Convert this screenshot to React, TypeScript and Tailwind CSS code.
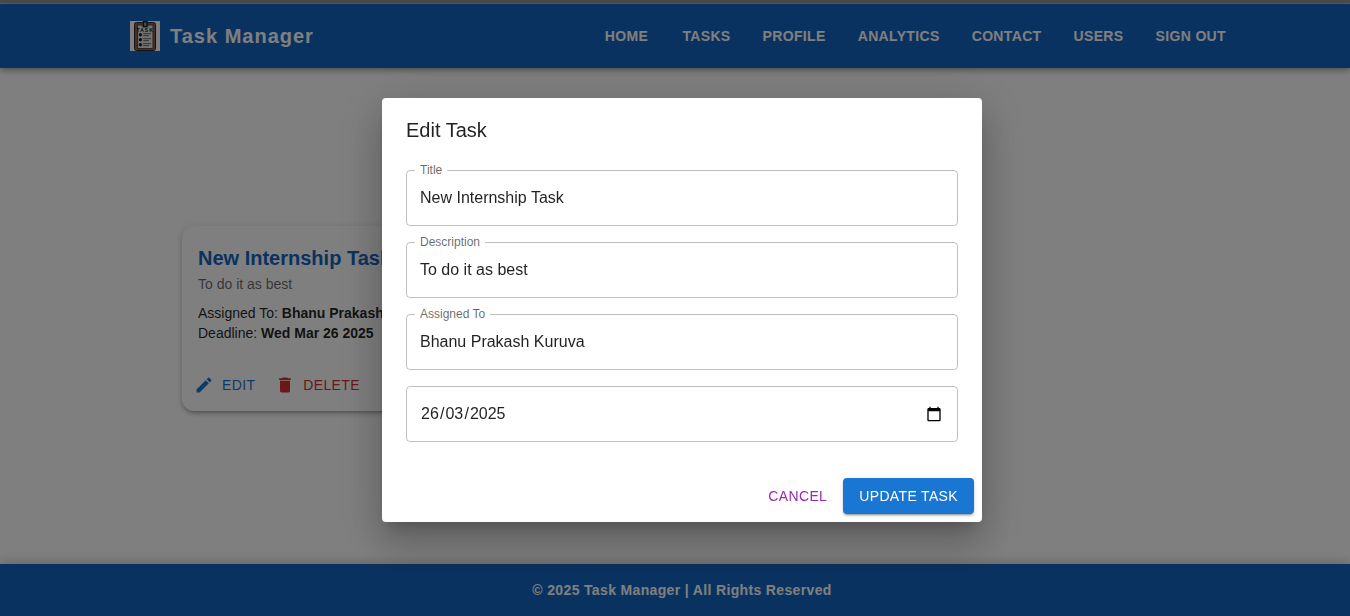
import { useState } from "react";
import { MdDelete, MdEdit } from "react-icons/md";

const links = ["Home", "Tasks", "Profile", "Analytics", "Contact", "Users", "Sign out"];

function Logo() {
  return (
    <svg viewBox="0 0 30 30" className="size-[30px]" role="img" aria-label="Clipboard">
      <rect width="30" height="30" fill="#fff" />
      <rect x="4.500" y="1.500" width="21" height="28" rx="2" fill="#94604a" stroke="#2e2726" />
      <rect x="7.500" y="4" width="15.500" height="23.500" fill="#e4e4e4" stroke="#4c4745" />
      <rect x="11.500" y="3" width="7" height="2.500" fill="#5b6068" />
      <rect x="13.500" y="0.700" width="3.500" height="5" fill="#8c969e" stroke="#15191f" strokeWidth="1.300" />
      <text
        x="15.200"
        y="11"
        textAnchor="middle"
        fontSize="5"
        fontWeight="700"
        fontFamily="Liberation Sans, sans-serif"
        fill="#111"
      >
        TASK
      </text>
      {[13.7, 18.7, 23.7].map((y) => (
        <g key={y}>
          <circle cx="10.400" cy={y} r="1.700" fill="#222" />
          <path d={`M13.200 ${y - 1}h7.800M13.200 ${y + 1}h5.800`} stroke="#666" />
        </g>
      ))}
    </svg>
  );
}

function CalendarIcon() {
  return (
    <svg viewBox="0 0 24 24" className="size-4" aria-hidden="true">
      <path
        d="M20 3h-1V1h-2v2H7V1H5v2H4c-1.1 0-2 .9-2 2v16c0 1.1 .9 2 2 2h16c1.1 0 2-.9 2-2V5c0-1.1-.9-2-2-2zm0 18H4V8h16v13z"
        fill="#000"
      />
    </svg>
  );
}

function Field({ id, label, initial }: { id: string; label: string; initial: string }) {
  const [value, setValue] = useState(initial);
  return (
    <div className="relative">
      <label htmlFor={id} className="absolute -top-2 left-[9px] bg-white px-[5px] text-xs text-black/60">
        {label}
      </label>
      <input
        id={id}
        value={value}
        onChange={(e) => setValue(e.target.value)}
        className="h-14 w-full rounded border border-black/25 px-[13px] text-base text-black/87 outline-none focus:border-[#1976d2]"
      />
    </div>
  );
}

function DateField() {
  return (
    <div
      role="group"
      aria-label="Deadline"
      className="flex h-14 items-center rounded border border-black/25 px-[13px] text-base text-black/87"
    >
      <input aria-label="Day" defaultValue="26" maxLength={2} className="w-5 px-px outline-none" />
      <span>/</span>
      <input aria-label="Month" defaultValue="03" maxLength={2} className="w-5 px-px outline-none" />
      <span>/</span>
      <input aria-label="Year" defaultValue="2025" maxLength={4} className="w-10 px-px outline-none" />
      <button type="button" aria-label="Open calendar" className="ml-auto px-0.5">
        <CalendarIcon />
      </button>
    </div>
  );
}

function TaskCard() {
  return (
    <article className="w-[300px] rounded-xl bg-white shadow-[0_3px_3px_-2px_rgba(0,0,0,0.2),0_3px_4px_0_rgba(0,0,0,0.14),0_1px_8px_0_rgba(0,0,0,0.12)]">
      <div className="p-4 text-sm leading-5">
        <h2 className="text-xl leading-8 font-bold text-[#1565c0]">New Internship Task</h2>
        <p className="text-black/60">To do it as best</p>
        <p className="mt-[9px]">
          Assigned To: <strong>Bhanu Prakash Kuruva</strong>
        </p>
        <p>
          Deadline: <strong>Wed Mar 26 2025</strong>
        </p>
      </div>
      <div className="flex gap-2 p-2 text-sm leading-6 tracking-wide">
        <button type="button" className="flex items-center gap-2 py-1.5 pr-2 pl-1 text-[#1976d2] uppercase">
          <MdEdit className="size-5" />
          Edit
        </button>
        <button type="button" className="flex items-center gap-2 py-1.5 pr-2 pl-1 text-[#d32f2f] uppercase">
          <MdDelete className="size-5" />
          Delete
        </button>
      </div>
    </article>
  );
}

function EditDialog() {
  return (
    <div className="fixed inset-0 flex items-center justify-center bg-black/50 pt-1 pl-3.5">
      <form
        role="dialog"
        aria-modal="true"
        aria-labelledby="dialog-title"
        onSubmit={(e) => e.preventDefault()}
        className="w-full max-w-[600px] rounded bg-white shadow-[0_11px_15px_-7px_rgba(0,0,0,0.2),0_24px_38px_3px_rgba(0,0,0,0.14),0_9px_46px_8px_rgba(0,0,0,0.12)]"
      >
        <h2 id="dialog-title" className="px-6 py-4 text-xl leading-8 text-black/87">
          Edit Task
        </h2>
        <div className="flex flex-col gap-4 px-6 pt-2 pb-7">
          <Field id="title" label="Title" initial="New Internship Task" />
          <Field id="description" label="Description" initial="To do it as best" />
          <Field id="assigned" label="Assigned To" initial="Bhanu Prakash Kuruva" />
          <DateField />
        </div>
        <div className="flex justify-end gap-2 p-2 text-sm leading-6 tracking-wide">
          <button type="button" className="rounded px-2 py-1.5 text-[#9c27b0] uppercase">
            Cancel
          </button>
          <button
            type="submit"
            className="rounded bg-[#1976d2] px-4 py-1.5 text-white uppercase shadow-[0_3px_1px_-2px_rgba(0,0,0,0.2),0_2px_2px_0_rgba(0,0,0,0.14),0_1px_5px_0_rgba(0,0,0,0.12)]"
          >
            Update Task
          </button>
        </div>
      </form>
    </div>
  );
}

export default function App() {
  return (
    <div className="flex min-h-screen flex-col bg-white font-['Liberation_Sans',Arial,sans-serif] text-black/87">
      <div className="h-1 border-b border-[#b8b4ae] bg-[#969696]" />
      <header className="bg-[#1565c0] pl-3.5 text-white shadow-[0_2px_4px_-1px_rgba(0,0,0,0.2),0_4px_5px_0_rgba(0,0,0,0.14),0_1px_10px_0_rgba(0,0,0,0.12)]">
        <div className="mx-auto flex h-16 max-w-[1200px] items-center justify-between px-12">
          <a href="#home" className="flex items-center gap-2.5 text-xl font-bold tracking-wider">
            <Logo />
            Task Manager
          </a>
          <nav className="flex gap-4 text-sm leading-6 font-bold tracking-wide">
            {links.map((link) => (
              <a key={link} href="#" className="min-w-16 px-2 py-1.5 text-center uppercase">
                {link}
              </a>
            ))}
          </nav>
        </div>
      </header>
      <main className="flex flex-1 items-center pt-1 pl-3.5">
        <div className="mx-auto w-full max-w-[1000px]">
          <TaskCard />
        </div>
      </main>
      <footer className="bg-[#1565c0] py-4 pl-3.5 text-center text-sm leading-5 font-bold tracking-wide text-white shadow-[0_-2px_10px_0_rgba(0,0,0,0.2)]">
        © 2025 Task Manager | All Rights Reserved
      </footer>
      <EditDialog />
    </div>
  );
}
